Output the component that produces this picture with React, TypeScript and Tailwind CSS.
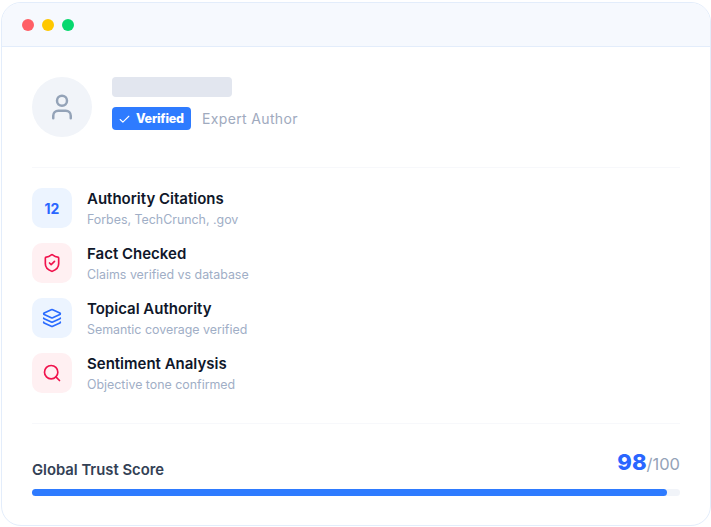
import { Check, Layers, Search, ShieldCheck, User } from 'lucide-react'

const font = "font-['Inter','Noto_Sans',sans-serif]"

const rows = [
  { title: 'Authority Citations', sub: 'Forbes, TechCrunch, .gov', tone: 'blue', icon: <span className="text-[14px] font-bold text-[#2a66ff]">12</span> },
  { title: 'Fact Checked', sub: 'Claims verified vs database', tone: 'red', icon: <ShieldCheck className="w-[20px] h-[20px] text-[#f0134d]" strokeWidth={2} /> },
  { title: 'Topical Authority', sub: 'Semantic coverage verified', tone: 'blue', icon: <Layers className="w-[20px] h-[20px] text-[#2a6bff]" strokeWidth={2} /> },
  { title: 'Sentiment Analysis', sub: 'Objective tone confirmed', tone: 'red', icon: <Search className="w-[20px] h-[20px] text-[#f0134d]" strokeWidth={2} /> },
]

export default function App() {
  return (
    <div className={`${font} w-[711px] h-[527px] bg-white pt-[2px] pb-[1px] pl-[1px]`}>
      <div className="h-[524px] rounded-[20px] border border-[#e3edfb] bg-white overflow-hidden">
        <div className="h-[44px] bg-[#f6f9fe] border-b border-[#e3edfb] flex items-center gap-[8px] pl-[20px]">
          <span className="w-[12px] h-[12px] rounded-full bg-[#ff5f66]" />
          <span className="w-[12px] h-[12px] rounded-full bg-[#ffc800]" />
          <span className="w-[12px] h-[12px] rounded-full bg-[#06d86e]" />
        </div>

        <div className="px-[30px] pt-[30px]">
          <div className="flex items-start gap-[20px] pb-[30px] border-b border-[#f7f8fb]">
            <div className="w-[60px] h-[60px] rounded-full bg-[#f1f4f9] flex items-center justify-center">
              <User className="w-[30px] h-[30px] text-[#94a3b8]" strokeWidth={2} />
            </div>
            <div>
              <div className="w-[120px] h-[20px] rounded-[4px] bg-[#e2e6ef] mb-[10px]" />
              <div className="flex items-center gap-[11px]">
                <span className="h-[23px] w-[79px] rounded-[4px] bg-[#2e7bff] flex items-center gap-[5px] pl-[6px] pt-[1px] text-white text-[12.5px] font-extrabold tracking-[-0.2px]">
                  <Check className="w-[13px] h-[13px]" strokeWidth={2} />
                  Verified
                </span>
                <span className="text-[14px] text-[#a0aabe] tracking-[0.35px]">Expert Author</span>
              </div>
            </div>
          </div>

          <div className="pt-[20px] pb-[30px] flex flex-col gap-[15px] border-b border-[#f7f8fb]">
            {rows.map((r) => (
              <div key={r.title} className="flex items-start gap-[15px]">
                <div className={`w-[40px] h-[40px] rounded-[10px] flex items-center justify-center ${r.tone === 'blue' ? 'bg-[#ecf4ff]' : 'bg-[#fff0f2]'}`}>
                  {r.icon}
                </div>
                <div className="h-[40px] pt-[1px]">
                  <div className="text-[15px] leading-[20px] font-semibold text-[#0f172a]">{r.title}</div>
                  <div className="text-[12.4px] leading-[18px] text-[#a0aec6] mt-[2px]">{r.sub}</div>
                </div>
              </div>
            ))}
          </div>

          <div className="pt-[25px]">
            <div className="flex items-end justify-between h-[32px] mb-[8px]">
              <span className="text-[14.8px] leading-[20px] font-semibold text-[#334155] mb-[1px]">Global Trust Score</span>
              <span className="leading-[32px] mb-[1px]">
                <span className="text-[22px] font-extrabold text-[#2a66ff]">98</span>
                <span className="text-[16.5px] text-[#94a3b8]">/100</span>
              </span>
            </div>
            <div className="h-[7px] rounded-full bg-[#f1f4f9]">
              <div className="h-full rounded-full bg-[#2e7bff]" style={{ width: '98%' }} />
            </div>
          </div>
        </div>
      </div>
    </div>
  )
}
